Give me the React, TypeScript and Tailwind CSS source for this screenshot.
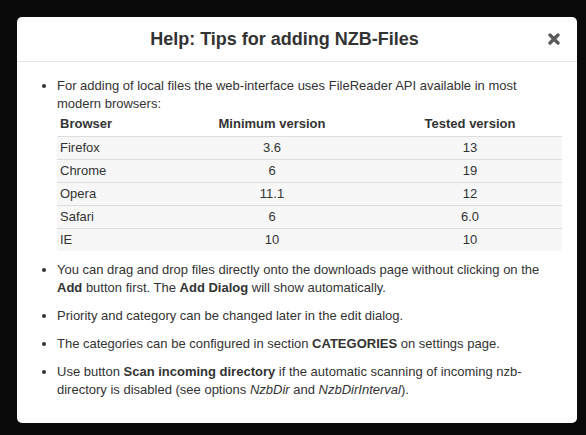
import React from 'react';

const rows = [
  ['Firefox', '3.6', '13'],
  ['Chrome', '6', '19'],
  ['Opera', '11.1', '12'],
  ['Safari', '6', '6.0'],
  ['IE', '10', '10'],
];

const CloseIcon: React.FC = () => (
  <svg width="12" height="12" viewBox="0 0 12 12" className="block">
    <path d="M2 2 L10 10 M10 2 L2 10" stroke="#5a5a5a" strokeWidth="3.4" strokeLinecap="round" />
  </svg>
);

const App: React.FC = () => {
  return (
    <div
      className="w-[586px] h-[435px] bg-[#0a0a0a] pt-[17px] pl-[17px] text-[#333]"
      style={{ fontFamily: '"Liberation Sans", Arial, sans-serif' }}
    >
      <div className="w-[560px] h-[406px] bg-white rounded-[5px] overflow-hidden">
        <div className="h-[45px] border-b border-[#e5e5e5] px-[15px] flex items-center">
          <h3 className="flex-1 text-center text-[18px] font-bold leading-[20px] text-[#333]">
            Help: Tips for adding NZB-Files
          </h3>
          <div className="w-[25px] flex justify-end pr-[2px]">
            <CloseIcon />
          </div>
        </div>
        <div className="px-[15px] pt-[15px] text-[13px] leading-[18px]">
          <ul className="list-disc pl-[25px] marker:text-[#333]">
            <li>
              For adding of local files the web-interface uses FileReader API available in most modern browsers:
              <table className="w-full table-fixed border-collapse">
                <colgroup>
                  <col className="w-[109px]" />
                  <col className="w-[212px]" />
                  <col />
                </colgroup>
                <thead>
                  <tr className="h-[23px]">
                    <th className="text-left font-bold px-[3px] py-0">Browser</th>
                    <th className="text-center font-bold px-[3px] py-0">Minimum version</th>
                    <th className="text-center font-bold px-[3px] py-0">Tested version</th>
                  </tr>
                </thead>
                <tbody>
                  {rows.map(r => (
                    <tr key={r[0]} className="h-[23px] bg-[#f7f7f7] border-t border-[#dddddd]">
                      <td className="text-left px-[3px] py-0">{r[0]}</td>
                      <td className="text-center px-[3px] py-0">{r[1]}</td>
                      <td className="text-center px-[3px] py-0">{r[2]}</td>
                    </tr>
                  ))}
                </tbody>
              </table>
            </li>
            <li className="mt-[10px]">
              You can drag and drop files directly onto the downloads page without clicking on the <b>Add</b> button
              first. The <b>Add Dialog</b> will show automatically.
            </li>
            <li className="mt-[10px]">Priority and category can be changed later in the edit dialog.</li>
            <li className="mt-[10px]">
              The categories can be configured in section <b>CATEGORIES</b> on settings page.
            </li>
            <li className="mt-[10px]">
              Use button <b>Scan incoming directory</b> if the automatic scanning of incoming nzb-directory is
              disabled (see options <i>NzbDir</i> and <i>NzbDirInterval</i>).
            </li>
          </ul>
        </div>
      </div>
    </div>
  );
};

export default App;
